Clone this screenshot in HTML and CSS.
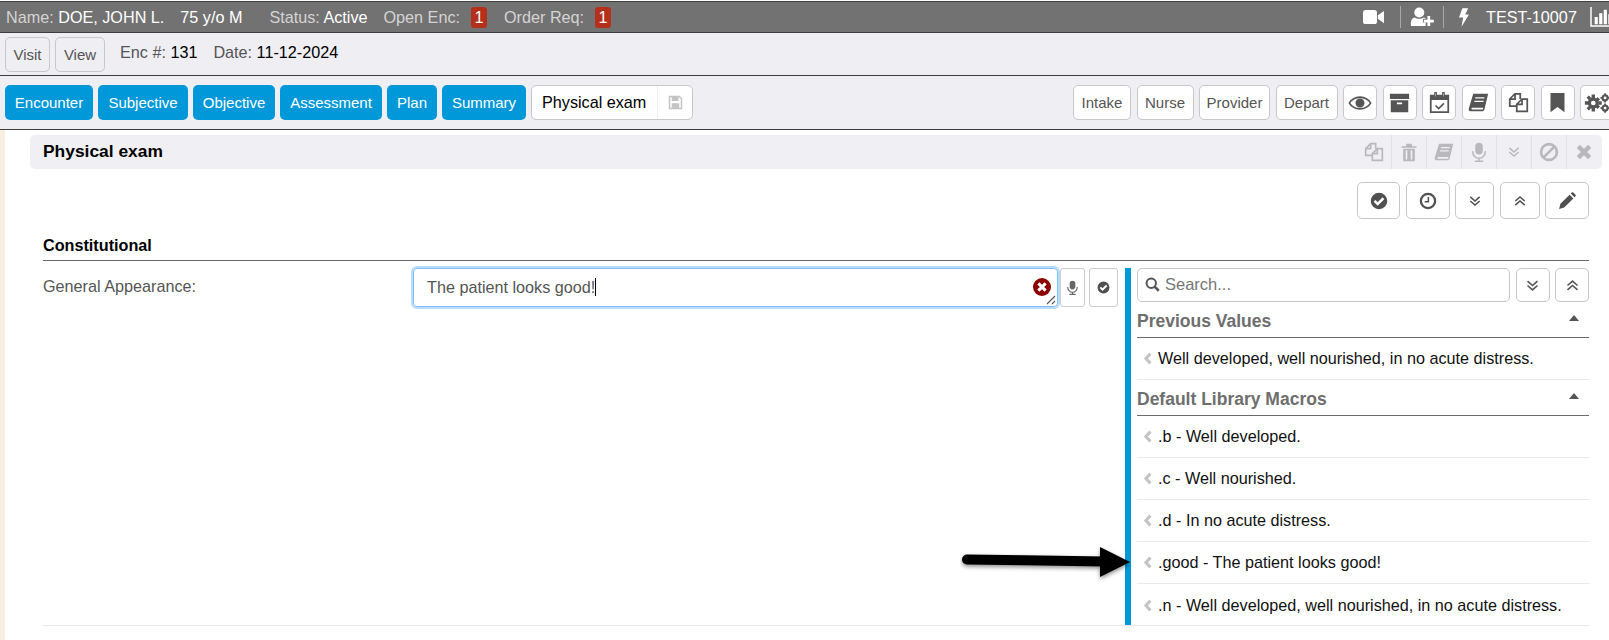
FILE: index.html
```html
<!DOCTYPE html>
<html lang="en">
<head>
<meta charset="utf-8">
<title>Physical exam</title>
<link rel="stylesheet" href="styles.css">
</head>
<body>
<svg class="defs" width="0" height="0" aria-hidden="true">
  <symbol id="i-check" viewBox="0 0 24 24"><path fill="currentColor" fill-rule="evenodd" d="M12 1a11 11 0 1 0 0 22 11 11 0 0 0 0-22zM10.2 18.4 4.9 13.100l2.400-2.400 2.900 2.900 6.500-6.500 2.400 2.400z"/></symbol>
  <symbol id="i-clock" viewBox="0 0 24 24"><circle cx="12" cy="12" r="9.500" fill="none" stroke="currentColor" stroke-width="3"/><path d="M12.500 6.500v6.500H7.500" fill="none" stroke="currentColor" stroke-width="2"/></symbol>
  <symbol id="i-down" viewBox="0 0 24 24"><path d="M4 5l8 7 8-7M4 12l8 7 8-7" fill="none" stroke="currentColor" stroke-width="2.600"/></symbol>
  <symbol id="i-up" viewBox="0 0 24 24"><path d="M4 12l8-7 8 7M4 19l8-7 8 7" fill="none" stroke="currentColor" stroke-width="2.600"/></symbol>
  <symbol id="i-pencil" viewBox="0 0 24 24"><path fill="currentColor" d="M1.500 22.500l1.700-6.700L15.500 3.500l5 5L8.200 20.800zM17 2l1.300-1.300c.7-.7 1.500-.7 2.200 0l2.800 2.800c.7.700.7 1.500 0 2.200L22 7z"/></symbol>
  <symbol id="i-copy" viewBox="0 0 24 24"><path fill="none" stroke="currentColor" stroke-width="2" d="M9 16H2V8l6-6h6v6M8 2v6H2M10 22V14l6-6h6v14zM16 8v6h-6"/></symbol>
  <symbol id="i-trash" viewBox="0 0 24 24"><path fill="currentColor" d="M3 5h18v2H3zM9 2h6l1 3H8zM5 8h14v15H5zM8 10v11h2V10zM14 10v11h2V10z" fill-rule="evenodd"/></symbol>
  <symbol id="i-book" viewBox="0 0 24 24"><path fill="currentColor" fill-rule="evenodd" d="M6 2h17l-4 17c-.3 1.500-1 3-3 3H3c-2 0-2.500-1.500-2-3.500zM8.500 6l-.4 1.500h10.500L19 6zM7.500 10l-.4 1.500h10.500L18 10zM4 19c0 .7.500 1 1 1h12l.4-2H4.500c-.3 0-.5.500-.5 1z"/></symbol>
  <symbol id="i-mic" viewBox="0 0 24 24"><rect x="7.500" y="1" width="9" height="14" rx="4.500" fill="currentColor"/><path d="M4.500 11v1a7.500 7.500 0 0 0 15 0v-1M12 20v3M7 23h10" fill="none" stroke="currentColor" stroke-width="1.800"/></symbol>
  <symbol id="i-ban" viewBox="0 0 24 24"><circle cx="12" cy="12" r="9.500" fill="none" stroke="currentColor" stroke-width="3.200"/><path d="M5.500 18.500l13-13" stroke="currentColor" stroke-width="3.200"/></symbol>
  <symbol id="i-x" viewBox="0 0 24 24"><path d="M4.500 4.500l15 15M19.500 4.500l-15 15" stroke="currentColor" stroke-width="6"/></symbol>
  <symbol id="i-eye" viewBox="0 0 32 24"><path fill="currentColor" fill-rule="evenodd" d="M16 3C9 3 3.500 7 .5 12c3 5 8.500 9 15.500 9s12.500-4 15.500-9C28.500 7 23 3 16 3zm0 2.200c5.700 0 10.300 2.900 13 6.800-2.700 3.900-7.300 6.800-13 6.800S5.700 15.900 3 12c2.700-3.900 7.300-6.800 13-6.800zM16 6a6 6 0 1 0 0 12 6 6 0 0 0 0-12z"/></symbol>
  <symbol id="i-archive" viewBox="0 0 24 24"><path fill="currentColor" fill-rule="evenodd" d="M1 2h22v6H1zM2 9.500h20V23H2zM9 12v2h6v-2z"/></symbol>
  <symbol id="i-cal" viewBox="0 0 24 24"><path fill="currentColor" fill-rule="evenodd" d="M6 0h3v3h6V0h3v3h5v21H1V3h5zM3 9v13h18V9zM7 1.500V5h.500V1.500zM16.500 1.500V5h.500V1.500z"/><path d="M7.500 15.500l3.500 3.500 6-6" fill="none" stroke="currentColor" stroke-width="1.800"/></symbol>
  <symbol id="i-bookmark" viewBox="0 0 24 24"><path fill="currentColor" d="M4 1h16v22l-8-6-8 6z"/></symbol>
  <symbol id="i-gears" viewBox="0 0 32 24"><g fill="currentColor"><circle cx="11" cy="12" r="6.500"/><path d="M9 2h4v4H9zM9 18h4v4H9zM1 10h4v4H1zM17 10h4v4h-4zM3 5.800 5.800 3l3 3L6 8.800zM13.200 16 16 13.200l3 3-2.800 2.800zM3 18.200 6 15.200 8.800 18l-3 3zM13.200 8 16.200 5 19 7.800l-3 3z"/></g><circle cx="11" cy="12" r="2.800" fill="#fff"/><g fill="none" stroke="currentColor"><circle cx="25" cy="6" r="3" stroke-width="2.600"/><circle cx="25" cy="18" r="3" stroke-width="2.600"/><path d="M25 .5v2M25 9.500v2M19.500 6h2M28.500 6h2M25 12.500v2M25 21.500v2M19.500 18h2M28.500 18h2" stroke-width="2"/></g></symbol>
  <symbol id="i-video" viewBox="0 0 24 20"><rect x="0" y="2" width="16" height="16" rx="3" fill="currentColor"/><path fill="currentColor" d="M17 8l7-5v14l-7-5z"/></symbol>
  <symbol id="i-userplus" viewBox="0 0 26 22"><circle cx="10" cy="6" r="5.500" fill="currentColor"/><path fill="currentColor" d="M1 21c-1-6 1-9 4-9.500 3 2 7 2 10 0 1 .2 2 .7 2.500 1.500H14v4h3v4z"/><path fill="currentColor" d="M19 10h3v4h4v3h-4v4h-3v-4h-4v-3h4z"/></symbol>
  <symbol id="i-bolt" viewBox="0 0 12 22"><path fill="currentColor" d="M4 0h7L7.500 7.500H12L3 22l2-11H0z"/></symbol>
  <symbol id="i-chart" viewBox="0 0 24 22"><path fill="none" stroke="currentColor" stroke-width="1.600" d="M1 0v21h23"/><path fill="currentColor" d="M5 11h3.500v8H5zM10 7h3.500v12H10zM15 3h3.500v16H15zM20 8h3.500v11H20z"/></symbol>
  <symbol id="i-save" viewBox="0 0 20 20"><path fill="none" stroke="currentColor" stroke-width="2" d="M2 2h13l3 3v13H2z"/><path fill="currentColor" d="M5 2h9v6H5zM5 11h10v7H5z"/></symbol>
  <symbol id="i-search" viewBox="0 0 24 24"><circle cx="10" cy="10" r="7.500" fill="none" stroke="currentColor" stroke-width="3.200"/><path d="M15.500 15.500l6.500 6.500" stroke="currentColor" stroke-width="4"/></symbol>
  <symbol id="i-left" viewBox="0 0 10 16"><path d="M8 2L2.500 8 8 14" fill="none" stroke="currentColor" stroke-width="3.800"/></symbol>
</svg>

<div class="stripe"></div>

<header class="topbar">
  <span>Name: <b>DOE, JOHN L.</b></span>
  <b class="age">75 y/o M</b>
  <span class="status">Status: <b>Active</b></span>
  <span class="open">Open Enc:</span><span class="badge">1</span>
  <span class="order">Order Req:</span><span class="badge">1</span>
  <div class="topright">
    <svg class="t-video"><use href="#i-video"/></svg>
    <i class="tsep sep-a"></i>
    <svg class="t-user"><use href="#i-userplus"/></svg>
    <i class="tsep sep-b"></i>
    <svg class="t-bolt"><use href="#i-bolt"/></svg>
    <b class="testid">TEST-10007</b>
    <svg class="t-chart"><use href="#i-chart"/></svg>
  </div>
</header>

<div class="encbar">
  <button class="btn visit">Visit</button>
  <button class="btn view">View</button>
  <span class="enc">Enc #: <b>131</b></span>
  <span class="date">Date: <b>11-12-2024</b></span>
</div>

<nav class="navbar">
  <button class="tab w-enc">Encounter</button>
  <button class="tab w-sub">Subjective</button>
  <button class="tab w-obj">Objective</button>
  <button class="tab w-ass">Assessment</button>
  <button class="tab w-plan">Plan</button>
  <button class="tab w-sum">Summary</button>
  <div class="current"><span>Physical exam</span><em><svg><use href="#i-save"/></svg></em></div>
  <div class="navright">
    <button class="btn w-in">Intake</button>
    <button class="btn w-nu">Nurse</button>
    <button class="btn w-pr">Provider</button>
    <button class="btn w-de">Depart</button>
    <button class="btn sq"><svg class="ic-eye"><use href="#i-eye"/></svg></button>
    <button class="btn sq"><svg><use href="#i-archive"/></svg></button>
    <button class="btn sq"><svg><use href="#i-cal"/></svg></button>
    <button class="btn sq"><svg><use href="#i-book"/></svg></button>
    <button class="btn sq"><svg><use href="#i-copy"/></svg></button>
    <button class="btn sq"><svg><use href="#i-bookmark"/></svg></button>
    <button class="btn sq"><svg class="ic-gears"><use href="#i-gears"/></svg></button>
  </div>
</nav>

<main class="content">
  <section class="sechead">
    <h1>Physical exam</h1>
    <div class="secicons">
      <span><svg><use href="#i-copy"/></svg></span>
      <span><svg><use href="#i-trash"/></svg></span>
      <span><svg><use href="#i-book"/></svg></span>
      <span><svg><use href="#i-mic"/></svg></span>
      <span><svg class="small"><use href="#i-down"/></svg></span>
      <span><svg><use href="#i-ban"/></svg></span>
      <span><svg class="xmark"><use href="#i-x"/></svg></span>
    </div>
  </section>

  <div class="tools">
    <button class="btn tool w43"><svg><use href="#i-check"/></svg></button>
    <button class="btn tool w44"><svg><use href="#i-clock"/></svg></button>
    <button class="btn tool w39"><svg class="small"><use href="#i-down"/></svg></button>
    <button class="btn tool w40"><svg class="small"><use href="#i-up"/></svg></button>
    <button class="btn tool w44"><svg><use href="#i-pencil"/></svg></button>
  </div>

  <h2 class="group">Constitutional</h2>

  <div class="formrow">
    <label class="fieldlabel">General Appearance:</label>
    <div class="field">
      <span class="fieldtext">The patient looks good!<i class="caret"></i></span>
      <svg class="clear" viewBox="0 0 20 20"><circle cx="10" cy="10" r="10" fill="#8b0000"/><path d="M6 6l8 8M14 6l-8 8" stroke="#fff" stroke-width="3.400"/></svg>
      <svg class="grip" viewBox="0 0 10 10"><path d="M9 1L1 9M9 6L6 9" stroke="#555" stroke-width="1.100"/></svg>
    </div>
    <button class="btn fieldbtn w25"><svg><use href="#i-mic"/></svg></button>
    <button class="btn fieldbtn w29"><svg class="c12"><use href="#i-check"/></svg></button>

    <aside class="panel">
      <div class="searchrow">
        <div class="search"><svg><use href="#i-search"/></svg><span>Search...</span></div>
        <button class="btn mini"><svg><use href="#i-down"/></svg></button>
        <button class="btn mini"><svg><use href="#i-up"/></svg></button>
      </div>
      <h3 class="ptitle">Previous Values<i class="tri"></i></h3>
      <div class="item"><svg><use href="#i-left"/></svg>Well developed, well nourished, in no acute distress.</div>
      <h3 class="ptitle">Default Library Macros<i class="tri"></i></h3>
      <div class="item"><svg><use href="#i-left"/></svg>.b - Well developed.</div>
      <div class="item"><svg><use href="#i-left"/></svg>.c - Well nourished.</div>
      <div class="item"><svg><use href="#i-left"/></svg>.d - In no acute distress.</div>
      <div class="item"><svg><use href="#i-left"/></svg>.good - The patient looks good!</div>
      <div class="item"><svg><use href="#i-left"/></svg>.n - Well developed, well nourished, in no acute distress.</div>
    </aside>
  </div>
</main>

<svg class="arrow" viewBox="0 0 180 40" aria-hidden="true">
  <defs><filter id="sh" x="-5%" y="-30%" width="110%" height="170%"><feDropShadow dx="0" dy="2" stdDeviation="2" flood-color="#000" flood-opacity=".45"/></filter></defs>
  <g filter="url(#sh)"><path d="M7 12.500L145 14.500" stroke="#000" stroke-width="10" stroke-linecap="round"/><path d="M140 0L170 15 140 30z" fill="#000"/></g>
</svg>
</body>
</html>
```

FILE: styles.css
```css
* { box-sizing: border-box; }
html, body { margin: 0; padding: 0; }
body {
  position: relative;
  width: 1609px;
  height: 640px;
  overflow: hidden;
  background: #fff;
  font-family: "Liberation Sans", Arial, sans-serif;
  font-size: 15px;
  color: #000;
}
.defs { position: absolute; }
button { font-family: inherit; padding: 0; cursor: pointer; }
b { font-weight: 400; }

.stripe {
  position: absolute;
  left: 0;
  top: 130px;
  width: 5px;
  height: 510px;
  background: #f6eede;
}

.topbar {
  margin-top: 1px;
  height: 32px;
  padding-left: 6px;
  display: flex;
  align-items: center;
  background: #727272;
  border-top: 1px solid #3d3d3d;
  border-bottom: 1px solid #3d3d3d;
  color: #d4d4d4;
  font-size: 16.200px;
  white-space: nowrap;
}
.topbar b { color: #fff; }
.age { margin-left: 16px; }
.status { margin-left: 27px; }
.open { margin-left: 16px; }
.order { margin-left: 17px; }
.badge {
  width: 16px;
  height: 21px;
  margin-left: 11px;
  border-radius: 3px;
  background: #b5301b;
  color: #fff;
  text-align: center;
  line-height: 21px;
}
.topright { margin-left: auto; display: flex; align-items: center; color: #fff; width: 246px; flex: none; }
.topright svg { display: block; flex: none; }
.t-video { width: 21px; height: 18px; }
.t-user { width: 24px; height: 20px; margin-left: 9px; }
.t-bolt { width: 10px; height: 19px; margin-left: 15px; }
.tsep { flex: none; width: 1px; height: 22px; background: #a8a8a8; }
.sep-a { margin-left: 16px; }
.sep-b { margin-left: 9px; }
.testid { margin-left: 17px; }
.t-chart { width: 24px; height: 20px; margin-left: 12px; }

.encbar {
  height: 43px;
  padding-left: 5px;
  display: flex;
  align-items: center;
  gap: 5px;
  background: #eeeef3;
  border-bottom: 1px solid #3d3d3d;
  color: #555;
  font-size: 16.200px;
}
.encbar b { color: #000; }
.btn {
  display: flex;
  align-items: center;
  justify-content: center;
  flex: none;
  height: 35px;
  background: #fff;
  border: 1px solid #c8c8c8;
  border-radius: 5px;
  color: #555;
  font-size: 15px;
}
.encbar .btn { background: #eeeef3; }
.visit { width: 45px; }
.view { width: 50px; }
.enc { margin: 0 0 4px 10px; }
.date { margin: 0 0 4px 11px; }

.navbar {
  height: 54px;
  padding: 9px 0 0 5px;
  display: flex;
  align-items: flex-start;
  gap: 5px;
  background: #eeeef3;
  border-bottom: 1px solid #3d3d3d;
}
.tab {
  height: 35px;
  flex: none;
  background: #0098d8;
  border: 0;
  border-radius: 5px;
  color: #fff;
  font-size: 15px;
}
.w-enc { width: 88px; }
.w-sub { width: 90px; }
.w-obj { width: 82px; }
.w-ass { width: 102px; }
.w-plan { width: 50px; }
.w-sum { width: 84px; }
.current {
  width: 162px;
  height: 35px;
  display: flex;
  align-items: center;
  background: #fff;
  border: 1px solid #c8c8c8;
  border-radius: 5px;
  font-size: 16.200px;
}
.current span { width: 125px; padding-left: 10px; white-space: nowrap; }
.current em { flex: 1; height: 100%; border-left: 1px solid #eee; display: flex; align-items: center; justify-content: center; }
.current svg { width: 15px; height: 15px; color: #c4c4c4; }
.navright { margin-left: auto; display: flex; gap: 5.500px; width: 536px; flex: none; }
.w-in { width: 58px; }
.w-nu { width: 57px; }
.w-pr { width: 71px; }
.w-de { width: 62px; }
.sq { width: 34px; }
.sq svg { width: 21px; height: 21px; color: #555; }
.sq .ic-eye { width: 24px; height: 18px; }
.sq .ic-gears { width: 27px; height: 22px; }

.content { padding: 5px 20px 0 43px; }
.sechead {
  height: 34px;
  margin: 0 0 0 -13px;
  padding: 0 0 2px 13px;
  display: flex;
  align-items: center;
  justify-content: space-between;
  background: #f0f0f4;
  border-radius: 5px;
  width: 1572px;
}
.sechead h1 { margin: 0; font-size: 17.400px; font-weight: 700; }
.secicons { display: flex; height: 34px; margin-bottom: -2px; padding-right: 1px; }
.secicons span {
  width: 35px;
  display: flex;
  align-items: center;
  justify-content: center;
  border-left: 1px solid #e2e2e6;
  color: #b9b9bb;
}
.secicons span:first-child { border-left: 0; }
.secicons svg { width: 20px; height: 20px; }
.secicons svg.small { width: 14px; height: 14px; }
.secicons svg.xmark { width: 18px; height: 18px; }

.tools {
  display: flex;
  justify-content: flex-end;
  gap: 5.500px;
  margin-top: 13px;
}
.tool { height: 37px; }
.tool svg { width: 18px; height: 18px; color: #505050; }
.tool svg.small { width: 14px; height: 14px; }
.w43 { width: 43px; }
.w44 { width: 44px; }
.w39 { width: 39px; }
.w40 { width: 40px; }

.group {
  margin: 11px 0 0;
  height: 31px;
  font-size: 16.200px;
  font-weight: 700;
  line-height: 30px;
  border-bottom: 1px solid #6a6a6a;
}

.formrow {
  display: flex;
  align-items: flex-start;
  padding-top: 7px;
  height: 365px;
  border-bottom: 1px solid #e8e8e8;
}
.fieldlabel { width: 370px; flex: none; color: #555; font-size: 16.200px; line-height: 36px; }
.field {
  position: relative;
  width: 645px;
  height: 39px;
  flex: none;
  padding-left: 13px;
  display: flex;
  align-items: center;
  border: 1px solid #7fbdf5;
  border-radius: 4px;
  box-shadow: 0 0 0 2px #b9dcfb;
  color: #555;
  font-size: 16.200px;
}
.caret { display: inline-block; width: 1px; height: 18px; background: #000; vertical-align: -3px; }
.clear { position: absolute; left: 619px; top: 9px; width: 18px; height: 18px; }
.grip { position: absolute; right: 1px; bottom: 1px; width: 10px; height: 10px; }
.fieldbtn { height: 39px; margin-left: 4px; border-color: #ccc; border-radius: 3px; }
.fieldbtn svg { width: 15px; height: 17px; color: #666; }
.fieldbtn svg.c12 { width: 13px; height: 13px; color: #505050; }
.w25 { width: 25px; }
.w29 { width: 29px; }
.field + .fieldbtn { margin-left: 2px; }

.panel {
  margin-left: 7px;
  flex: none;
  width: 464px;
  height: 357px;
  padding-left: 6px;
  border-left: 6px solid #0098d8;
}
.searchrow { display: flex; gap: 5.500px; }
.search {
  width: 374px;
  height: 34px;
  display: flex;
  align-items: center;
  gap: 5px;
  padding: 0 0 1px 7px;
  border: 1px solid #c8c8c8;
  border-radius: 5px;
  color: #777;
  font-size: 16.500px;
}
.search svg { width: 15px; height: 15px; color: #555; }
.mini { width: 34px; height: 34px; }
.mini svg { width: 15px; height: 15px; }
.ptitle {
  position: relative;
  margin: 0;
  height: 36px;
  padding-top: 9px;
  border-bottom: 1px solid #6a6a6a;
  color: #6e6e6e;
  font-size: 17.500px;
  font-weight: 700;
  line-height: 20px;
}
.tri {
  position: absolute;
  right: 10px;
  top: 13px;
  width: 0;
  height: 0;
  border: 5px solid transparent;
  border-top: 0;
  border-bottom: 6px solid #555;
}
.item {
  height: 42px;
  display: flex;
  align-items: center;
  border-bottom: 1px solid #eaeaea;
  font-size: 16.200px;
  color: #111;
  white-space: nowrap;
}
.item:last-child { border-bottom: 0; }
.item svg { width: 10px; height: 13px; margin: 0 5px 0 6px; color: #c4c4c4; flex: none; }

.arrow {
  position: absolute;
  left: 960px;
  top: 547px;
  width: 180px;
  height: 40px;
}
```
